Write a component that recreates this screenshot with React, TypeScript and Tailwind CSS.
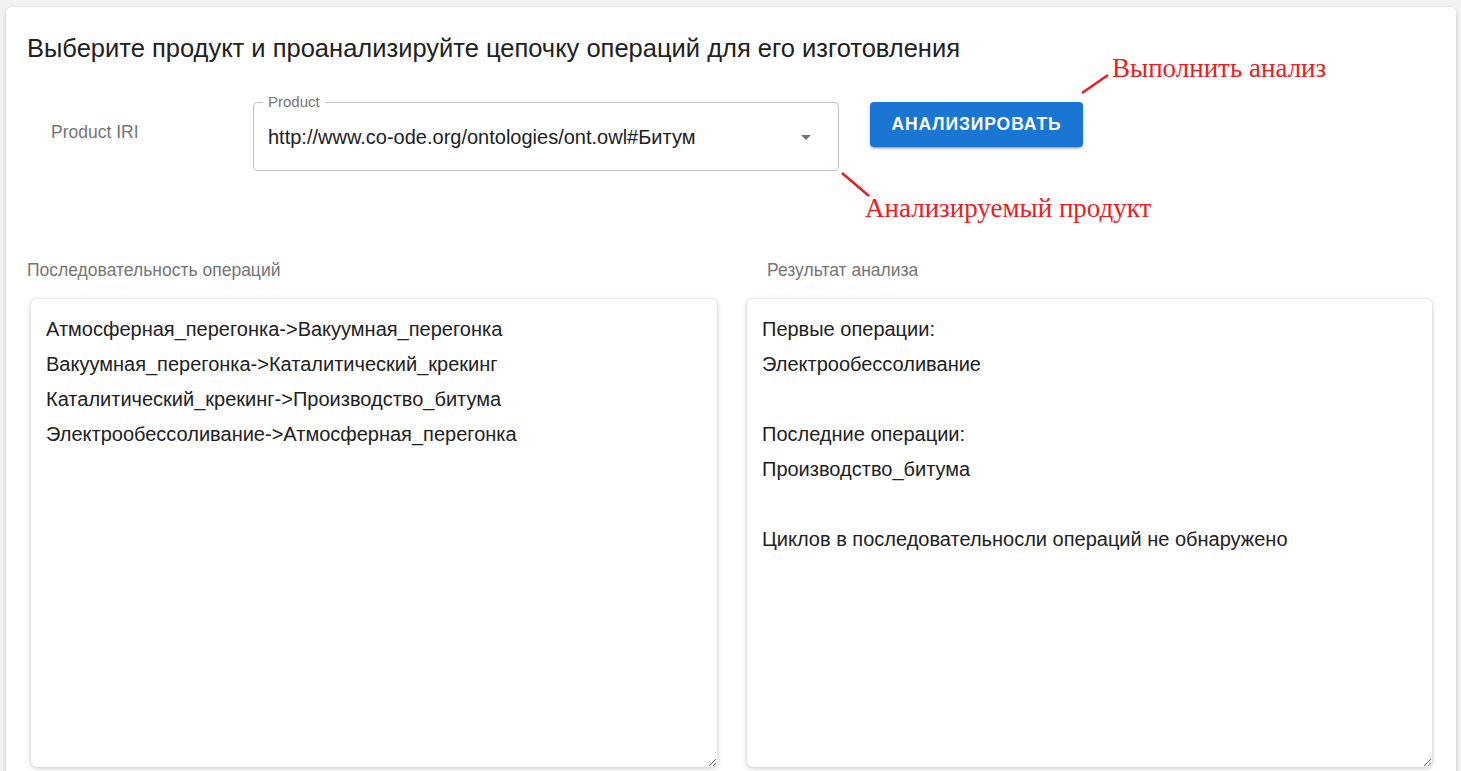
import React from "react";

const ops = `Атмосферная_перегонка->Вакуумная_перегонка
Вакуумная_перегонка->Каталитический_крекинг
Каталитический_крекинг->Производство_битума
Электрообессоливание->Атмосферная_перегонка`;

const result = `Первые операции:
Электрообессоливание

Последние операции:
Производство_битума

Циклов в последовательносли операций не обнаружено`;

const Note = ({ text, x, y }: { text: string; x: number; y: number }) => (
  <span
    className="absolute whitespace-nowrap text-[27px] leading-none text-[#ec1c24] font-['Liberation_Serif',serif]"
    style={{ left: x, top: y }}
  >
    {text}
  </span>
);

export default function App() {
  return (
    <div className="relative min-h-screen bg-[#f2f2f2] pl-[6px] pr-[5px] pt-[7px] font-['Liberation_Sans',Arial,sans-serif]">
      <div className="rounded-md bg-white pb-6 pl-[21px] pt-[25px] shadow-[0_2px_4px_rgba(0,0,0,0.2)]">
        <h1 className="text-[25.5px] leading-[32px] text-[#212121]">
          Выберите продукт и проанализируйте цепочку операций для его изготовления
        </h1>

        <div className="mt-[38px] flex items-start">
          <div className="w-[226px] pl-[24px] pt-[18px] text-[17.5px] leading-6 text-[#757575]">
            Product IRI
          </div>
          <div className="relative flex h-[69px] w-[586px] items-center rounded border border-[#c4c4c4] pl-[14px] pr-[20px]">
            <span className="absolute -top-[10px] left-[9px] bg-white px-[5px] text-[15px] leading-[18px] text-[#757575]">
              Product
            </span>
            <span className="flex-1 text-[20px] leading-6 text-[#212121]">
              http://www.co-ode.org/ontologies/ont.owl#Битум
            </span>
            <svg width="24" height="24" viewBox="0 0 24 24" className="fill-[#757575]">
              <path d="M7 10l5 5 5-5z" />
            </svg>
          </div>
          <button className="ml-[31px] h-[45px] w-[213px] rounded bg-[#1976d2] text-[17.5px] font-bold tracking-[0.9px] text-white shadow-[0_3px_1px_-2px_rgba(0,0,0,0.2),0_2px_2px_0_rgba(0,0,0,0.14),0_1px_5px_0_rgba(0,0,0,0.12)]">
            АНАЛИЗИРОВАТЬ
          </button>
        </div>

        <div className="mt-[87px] flex gap-[30px] pr-[24px]">
          <div className="flex flex-col">
            <div className="text-[17.5px] leading-6 text-[#757575]">Последовательность операций</div>
            <textarea
              readOnly
              value={ops}
              className="ml-[4px] mt-[17px] h-[468px] w-[686px] rounded-md px-[15px] pt-[13px] text-[20px] leading-[35px] text-[#212121] shadow-[0_1px_5px_rgba(0,0,0,0.25)] outline-none"
            />
          </div>
          <div className="flex flex-col">
            <div className="ml-[20px] text-[17.5px] leading-6 text-[#757575]">Результат анализа</div>
            <textarea
              readOnly
              value={result}
              className="mt-[17px] h-[468px] w-[685px] rounded-md px-[15px] pt-[13px] text-[20px] leading-[35px] text-[#212121] shadow-[0_1px_5px_rgba(0,0,0,0.25)] outline-none"
            />
          </div>
        </div>
      </div>

      <svg className="pointer-events-none absolute left-0 top-0" width="1461" height="771">
        <line x1="1082" y1="93" x2="1108" y2="75" stroke="#ec1c24" strokeWidth="2.5" />
        <line x1="842" y1="173" x2="869" y2="196" stroke="#ec1c24" strokeWidth="2.5" />
      </svg>
      <Note text="Выполнить анализ" x={1112} y={55} />
      <Note text="Анализируемый продукт" x={865} y={195} />
    </div>
  );
}
